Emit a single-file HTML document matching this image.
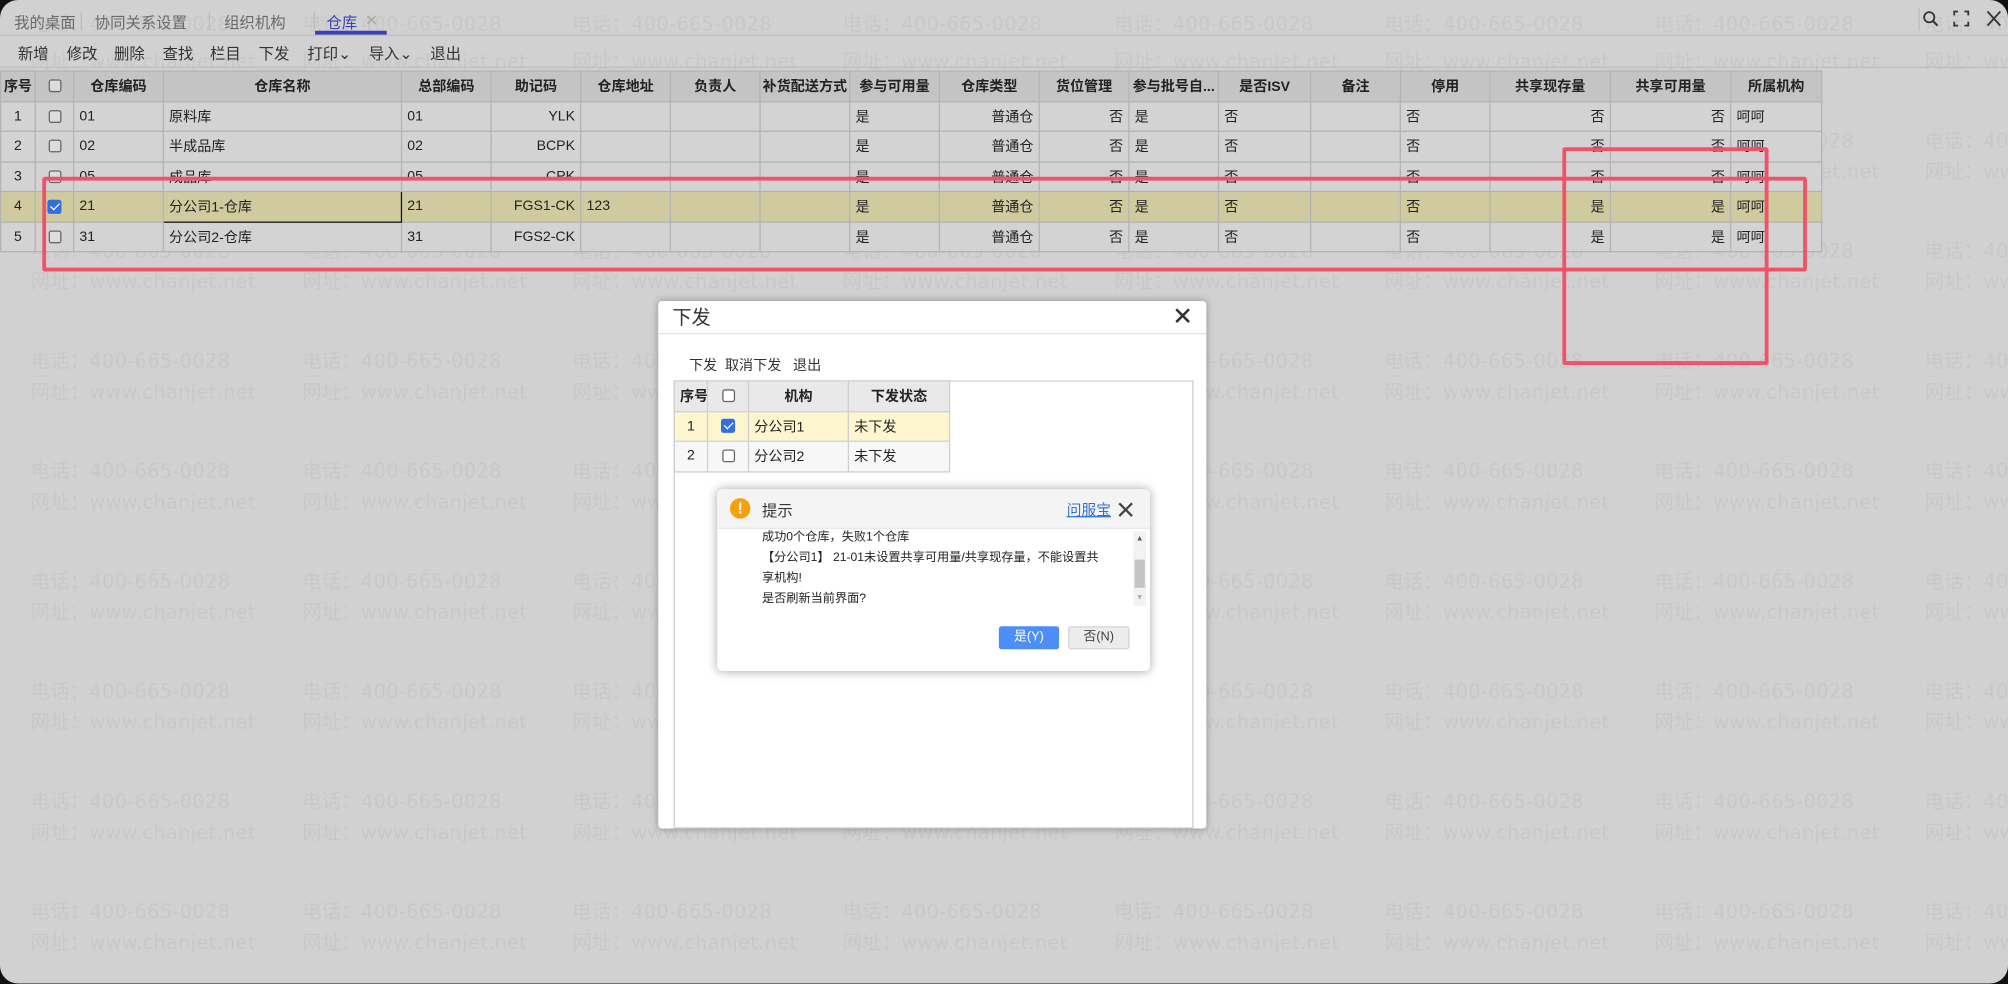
<!DOCTYPE html>
<html><head><meta charset="utf-8"><style>
*{box-sizing:border-box;margin:0;padding:0}
html,body{width:2008px;height:983px;overflow:hidden;background:#111}
#s{position:absolute;left:0;top:0;width:1568px;height:768px;transform:scale(1.28061);transform-origin:0 0;font-family:"Liberation Sans","Noto Sans CJK SC",sans-serif;color:#222}
#main{position:absolute;left:0;top:0;width:1568px;height:768px;background:#d1d1d1;border-radius:14px;overflow:hidden}
.a{position:absolute;white-space:nowrap}
.wm{position:absolute;color:#c8c8c8;font-size:15px;font-family:"DejaVu Sans","Noto Sans CJK SC",sans-serif;white-space:nowrap;letter-spacing:0.3px}
.tab{position:absolute;top:9px;font-size:12px;color:#6a6a6a}
.tb{position:absolute;top:33px;font-size:12px;color:#333}
table{border-collapse:collapse;table-layout:fixed;position:absolute}
td,th{border:1px solid #b3b3b3;font-size:11px;height:23.5px;padding:0 4px;white-space:nowrap;overflow:hidden;font-weight:normal}
#grid th{background:#c4c4c4;font-weight:bold;text-align:center;color:#222}
#grid td{background:#d3d3d3}
#grid tr.sel td{background:#d0ca9f}
.r{text-align:right}.c{text-align:center}
.cb{display:inline-block;width:10px;height:10px;border:1px solid #666;border-radius:2px;background:#ddd;vertical-align:middle}
.cbk{display:inline-block;width:11px;height:11px;border-radius:2px;background:#2f6fe0;vertical-align:middle;position:relative}
.cbk:after{content:"";position:absolute;left:3.5px;top:1px;width:3px;height:6px;border:solid #fff;border-width:0 1.5px 1.5px 0;transform:rotate(45deg)}
.red{position:absolute;border:3px solid #ee5468;border-radius:2px}
#dlg{position:absolute;left:514px;top:235px;width:428px;height:412px;background:#fff;border-radius:3px;box-shadow:0 0 6px rgba(0,0,0,.3);overflow:hidden}
#sub td,#sub th{border:1px solid #cfcfcf;height:23.5px;font-size:11px}
#sub th{background:#e9e9e9;font-weight:bold}
#alert{position:absolute;left:560px;top:382px;width:338px;height:142px;background:#fff;border-radius:4px;box-shadow:0 0 8px rgba(0,0,0,.35);overflow:hidden}
</style></head><body><div id="s"><div id="main">
<div id="wms"></div>
<div style="position:absolute;left:0;top:27px;width:1568px;height:1px;background:#bdbdbd"></div>
<div style="position:absolute;left:0;top:52px;width:1568px;height:1px;background:#bdbdbd"></div>
<div class="tab" style="left:11px">我的桌面</div>
<div class="a" style="left:63px;top:9px;width:1px;height:14px;background:#bbb"></div>
<div class="tab" style="left:74px">协同关系设置</div>
<div class="a" style="left:163px;top:9px;width:1px;height:14px;background:#bbb"></div>
<div class="tab" style="left:175px">组织机构</div>
<div class="a" style="left:245px;top:9px;width:1px;height:14px;background:#bbb"></div>
<div class="tab" style="left:255px;color:#3b3fb8">仓库</div>
<div class="tab" style="left:285px;color:#aaa;font-size:12px;top:9px">✕</div>
<div class="a" style="left:246px;top:24px;width:56px;height:2.5px;background:#3b3fb8"></div>
<div class="a" style="left:1498px;top:6px;width:1px;height:18px;background:#bbb"></div>
<svg class="a" style="left:1501px;top:8px" width="14" height="14" viewBox="0 0 14 14"><circle cx="5.5" cy="5.5" r="4" fill="none" stroke="#333" stroke-width="1.4"/><path d="M8.5 8.5L12 12" stroke="#333" stroke-width="1.6"/></svg>
<svg class="a" style="left:1525px;top:8px" width="13" height="13" viewBox="0 0 13 13"><path d="M1 4V1h3M9 1h3v3M12 9v3H9M4 12H1V9" fill="none" stroke="#333" stroke-width="1.4"/></svg>
<svg class="a" style="left:1551px;top:8px" width="12" height="13" viewBox="0 0 12 13"><path d="M1 1l10 11M11 1L1 12" stroke="#333" stroke-width="1.4"/></svg>
<div class="tb" style="left:14px">新增</div><div class="tb" style="left:52px">修改</div><div class="tb" style="left:89px">删除</div><div class="tb" style="left:127px">查找</div><div class="tb" style="left:164px">栏目</div><div class="tb" style="left:202px">下发</div><div class="tb" style="left:240px">打印⌄</div><div class="tb" style="left:288px">导入⌄</div><div class="tb" style="left:336px">退出</div>
<table id="grid" style="left:0;top:55px;width:1422px">
<colgroup><col style="width:27px"><col style="width:30px"><col style="width:70px"><col style="width:186px"><col style="width:70px"><col style="width:70px"><col style="width:70px"><col style="width:70px"><col style="width:70px"><col style="width:70px"><col style="width:78px"><col style="width:70px"><col style="width:70px"><col style="width:72px"><col style="width:70px"><col style="width:70px"><col style="width:94px"><col style="width:94px"><col style="width:71px"></colgroup>
<tr><th style="padding:0">序号</th><th><span class="cb"></span></th><th>仓库编码</th><th>仓库名称</th><th>总部编码</th><th>助记码</th><th>仓库地址</th><th>负责人</th><th style="padding:0">补货配送方式</th><th>参与可用量</th><th>仓库类型</th><th>货位管理</th><th style="padding:0 1px">参与批号自...</th><th>是否ISV</th><th>备注</th><th>停用</th><th>共享现存量</th><th>共享可用量</th><th>所属机构</th></tr>
<tr><td class="c">1</td><td class="c"><span class="cb"></span></td><td>01</td><td>原料库</td><td>01</td><td class="r">YLK</td><td></td><td></td><td></td><td>是</td><td class="r">普通仓</td><td class="r">否</td><td>是</td><td>否</td><td></td><td>否</td><td class="r">否</td><td class="r">否</td><td>呵呵</td></tr>
<tr><td class="c">2</td><td class="c"><span class="cb"></span></td><td>02</td><td>半成品库</td><td>02</td><td class="r">BCPK</td><td></td><td></td><td></td><td>是</td><td class="r">普通仓</td><td class="r">否</td><td>是</td><td>否</td><td></td><td>否</td><td class="r">否</td><td class="r">否</td><td>呵呵</td></tr>
<tr><td class="c">3</td><td class="c"><span class="cb"></span></td><td>05</td><td>成品库</td><td>05</td><td class="r">CPK</td><td></td><td></td><td></td><td>是</td><td class="r">普通仓</td><td class="r">否</td><td>是</td><td>否</td><td></td><td>否</td><td class="r">否</td><td class="r">否</td><td>呵呵</td></tr>
<tr class="sel"><td class="c">4</td><td class="c"><span class="cbk"></span></td><td>21</td><td style="border:1.5px solid #111">分公司1-仓库</td><td>21</td><td class="r">FGS1-CK</td><td>123</td><td></td><td></td><td>是</td><td class="r">普通仓</td><td class="r">否</td><td>是</td><td>否</td><td></td><td>否</td><td class="r">是</td><td class="r">是</td><td>呵呵</td></tr>
<tr><td class="c">5</td><td class="c"><span class="cb"></span></td><td>31</td><td>分公司2-仓库</td><td>31</td><td class="r">FGS2-CK</td><td></td><td></td><td></td><td>是</td><td class="r">普通仓</td><td class="r">否</td><td>是</td><td>否</td><td></td><td>否</td><td class="r">是</td><td class="r">是</td><td>呵呵</td></tr>
</table>
<div class="red" style="left:33px;top:138px;width:1378px;height:74px"></div>
<div class="red" style="left:1220px;top:115px;width:161px;height:170px"></div>
</div>
<div id="dlg">
<div class="a" style="left:11px;top:2px;font-size:15px;color:#333">下发</div>
<svg class="a" style="left:403px;top:5px" width="13" height="13" viewBox="0 0 13 13"><path d="M1.5 1.5l10 10M11.5 1.5l-10 10" stroke="#333" stroke-width="2"/></svg>
<div class="a" style="left:0;top:25px;width:428px;height:1px;background:#e2e2e2"></div>
<div class="a" style="left:24px;top:42px;font-size:11px;color:#333">下发&nbsp;&nbsp;取消下发&nbsp;&nbsp;&nbsp;退出</div>
<div class="a" style="left:12px;top:62px;width:406px;height:350px;border:1px solid #cfcfcf"></div>
<table id="sub" style="left:12px;top:62px;width:215px">
<colgroup><col style="width:26px"><col style="width:32px"><col style="width:78px"><col style="width:79px"></colgroup>
<tr><th>序号</th><th><span class="cb" style="background:#fff"></span></th><th>机构</th><th>下发状态</th></tr>
<tr style="background:#fdf6cf"><td class="c">1</td><td class="c"><span class="cbk"></span></td><td>分公司1</td><td>未下发</td></tr>
<tr style="background:#f7f7f7"><td class="c">2</td><td class="c"><span class="cb" style="background:#fff"></span></td><td>分公司2</td><td>未下发</td></tr>
</table>
</div>
<div id="alert">
<div class="a" style="left:0;top:0;width:338px;height:31px;background:#f4f4f4;border-bottom:1px solid #e6e6e6"></div>
<div class="a" style="left:10px;top:7px;width:16px;height:16px;border-radius:50%;background:#f5a10f;color:#fff;font-size:12px;font-weight:bold;text-align:center;line-height:16px">!</div>
<div class="a" style="left:35px;top:8px;font-size:12px;color:#333">提示</div>
<div class="a" style="left:273px;top:8px;font-size:11.5px;color:#2d6fe0;text-decoration:underline">问服宝</div>
<svg class="a" style="left:313px;top:10px" width="12" height="12" viewBox="0 0 12 12"><path d="M1 1l10 10M11 1L1 11" stroke="#444" stroke-width="1.8"/></svg>
<div class="a" style="left:35px;top:30px;font-size:9.5px;line-height:16px;color:#222">成功0个仓库，失败1个仓库<br>【分公司1】 21-01未设置共享可用量/共享现存量，不能设置共<br>享机构!<br>是否刷新当前界面?</div>
<div class="a" style="left:325px;top:33px;width:10px;height:58px;background:#f2f2f2"></div>
<div class="a" style="left:326px;top:55px;width:8px;height:22px;background:#c4c4c4"></div>
<div class="a" style="left:327px;top:36px;font-size:6px;color:#555">▲</div>
<div class="a" style="left:327px;top:82px;font-size:6px;color:#aaa">▼</div>
<div class="a" style="left:220px;top:107px;width:47px;height:18px;background:#4c8ef5;border-radius:2px;color:#fff;font-size:10px;text-align:center;line-height:18px">是(Y)</div>
<div class="a" style="left:274px;top:107px;width:48px;height:18px;background:#ececec;border:1px solid #d4d4d4;border-radius:2px;color:#444;font-size:10px;text-align:center;line-height:16px">否(N)</div>
</div>
</div>
<script>
var h='',xs=[24,236,447,658,870,1081,1292,1503];
var ys=[10,96,182,268,354,440,526,612,698];
for(var i=0;i<ys.length;i++)for(var j=0;j<xs.length;j++){
h+='<div class="wm" style="left:'+xs[j]+'px;top:'+(ys[i]+(i==0?-2:3))+'px">电话：400-665-0028</div>';
h+='<div class="wm" style="left:'+xs[j]+'px;top:'+(ys[i]+27)+'px">网址：www.chanjet.net</div>';}
document.getElementById('wms').innerHTML=h;
</script>
</body></html>
